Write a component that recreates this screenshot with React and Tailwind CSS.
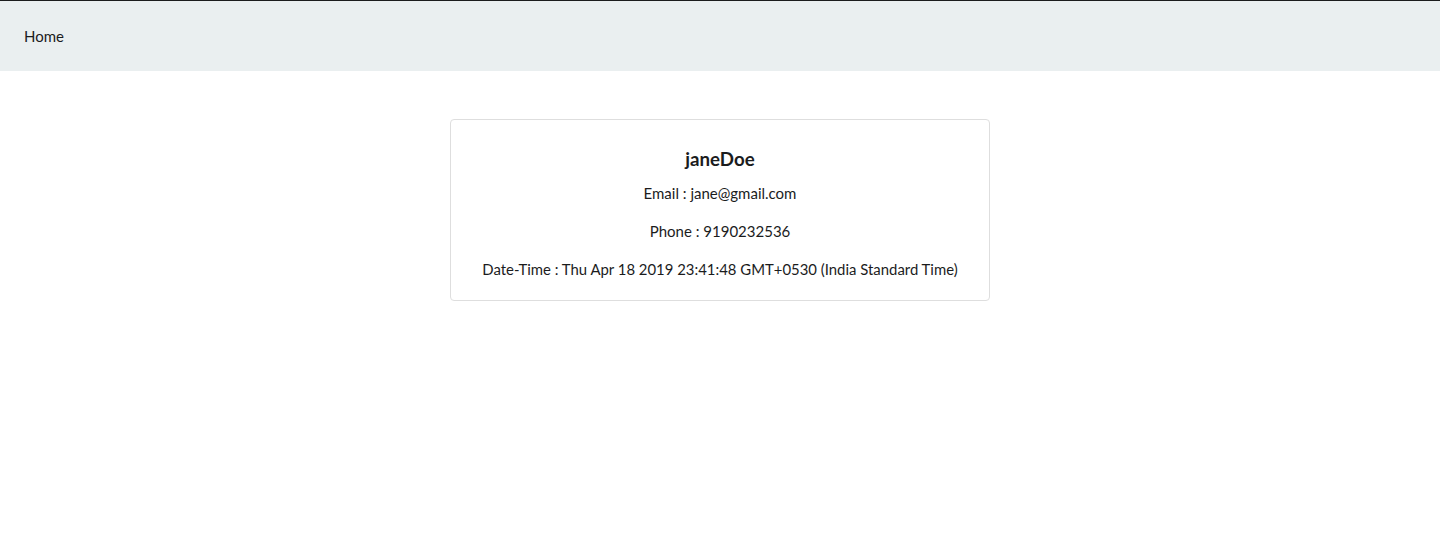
import React from "react";

export default function App() {
  const user = {
    username: "janeDoe",
    email: "jane@gmail.com",
    phone: "9190232536",
    dateTime: "Thu Apr 18 2019 23:41:48 GMT+0530 (India Standard Time)",
  };

  return (
    <div className="min-h-screen bg-white font-['Lato',sans-serif] text-[#1b1c1d]">
      {/* Navbar */}
      <div className="h-[71px] bg-[#eaeff0] border-t border-[#1b1c1d] flex items-center px-6">
        <span className="text-[15px]">Home</span>
      </div>

      {/* Profile card */}
      <div className="flex justify-center mt-[48px]">
        <div className="w-[540px] border border-[#dedede] rounded-[4px] px-4 pt-[26px] pb-[21px] text-center">
          <h3 className="text-[18.7px] font-bold leading-[26px] mb-[11px]">{user.username}</h3>
          <p className="text-[15px] leading-[20px] mb-[18px]">Email : {user.email}</p>
          <p className="text-[15px] leading-[20px] mb-[18px]">Phone : {user.phone}</p>
          <p className="text-[14.9px] leading-[20px]">Date-Time : {user.dateTime}</p>
        </div>
      </div>
    </div>
  );
}
